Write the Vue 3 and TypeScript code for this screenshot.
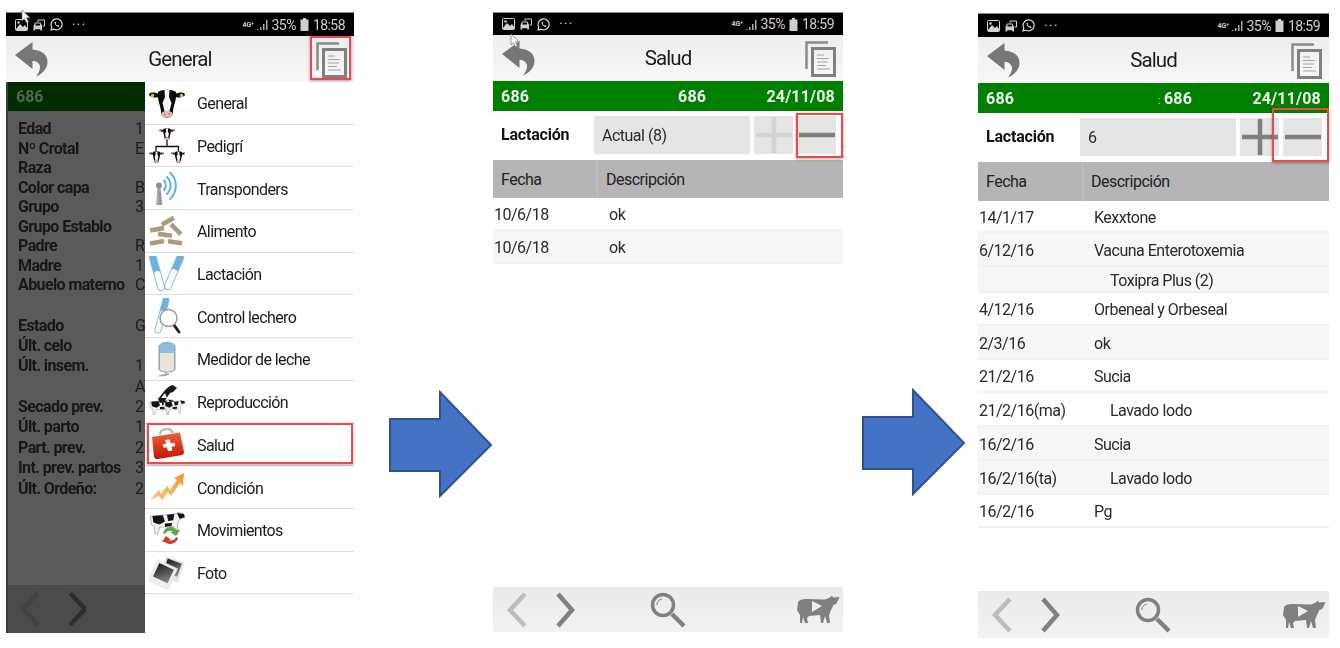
<script setup lang="ts">
interface Row { date: string; desc: string; indent?: boolean; alt?: boolean; h: number }
interface Screen {
  id: string; time: string; title: string; colon: boolean; lact: string; plusOn: boolean;
  rows: Row[];
}

const cols = [
  { y: 0, rows: [
    ['Edad', '10'], ['Nº Crotal', 'ES'], ['Raza', ''], ['Color capa', 'Bl'], ['Grupo', '3'],
    ['Grupo Establo', ''], ['Padre', 'R-'], ['Madre', '10'], ['Abuelo materno', 'C.'],
  ] },
  { y: 1, rows: [
    ['Estado', 'G'], ['Últ. celo', ''], ['Últ. insem.', '1'], ['', 'A'], ['Secado prev.', '2'],
    ['Últ. parto', '1'], ['Part. prev.', '2'], ['Int. prev. partos', '3'], ['Últ. Ordeño:', '2'],
  ] },
];

const menu = ['General', 'Pedigrí', 'Transponders', 'Alimento', 'Lactación', 'Control lechero',
  'Medidor de leche', 'Reproducción', 'Salud', 'Condición', 'Movimientos', 'Foto'];

const screens: Screen[] = [
  { id: 'p2', time: '18:59', title: 'Salud', colon: false, lact: 'Actual (8)', plusOn: false, rows: [
    { date: '10/6/18', desc: 'ok', h: 33 },
    { date: '10/6/18', desc: 'ok', alt: true, h: 33 },
  ] },
  { id: 'p3', time: '18:59', title: 'Salud', colon: true, lact: '6', plusOn: true, rows: [
    { date: '14/1/17', desc: 'Kexxtone', h: 32 },
    { date: '6/12/16', desc: 'Vacuna Enterotoxemia', alt: true, h: 34 },
    { date: '', desc: 'Toxipra Plus (2)', indent: true, alt: true, h: 26 },
    { date: '4/12/16', desc: 'Orbeneal y Orbeseal', h: 33 },
    { date: '2/3/16', desc: 'ok', alt: true, h: 34 },
    { date: '21/2/16', desc: 'Sucia', h: 33 },
    { date: '21/2/16(ma)', desc: 'Lavado Iodo', indent: true, h: 34 },
    { date: '16/2/16', desc: 'Sucia', alt: true, h: 34 },
    { date: '16/2/16(ta)', desc: 'Lavado Iodo', indent: true, alt: true, h: 34 },
    { date: '16/2/16', desc: 'Pg', h: 33 },
  ] },
];

const statusScreens = [
  { id: 'p1', time: '18:58', title: 'General' },
  ...screens,
];
</script>

<template>
  <div class="stage">
    <svg class="defs" width="0" height="0" aria-hidden="true">
      <defs>
        <symbol id="cowhead" viewBox="0 0 36 30">
          <ellipse cx="5" cy="6" rx="5" ry="2.4" fill="#111" transform="rotate(8 5 6)" />
          <ellipse cx="31" cy="6" rx="5" ry="2.4" fill="#111" transform="rotate(-8 31 6)" />
          <circle cx="3.500" cy="6.500" r="1.700" fill="#d9c92e" />
          <circle cx="32.500" cy="6.500" r="1.700" fill="#d9c92e" />
          <path d="M9 3C13 0 23 0 27 3C28 10 25 15 24 22C24 27 21 28.500 18 28.500C15 28.500 12 27 12 22C11 15 8 10 9 3Z" fill="#0c0c0c" />
          <path d="M15.500 1H20.500L20 8L22.500 14L20.500 22H15.500L13.500 14L16 8Z" fill="#f4f4f4" />
          <ellipse cx="18" cy="25" rx="5.600" ry="3.300" fill="#eab9ab" />
          <circle cx="15.800" cy="25" r=".8" fill="#8b5a50" />
          <circle cx="20.200" cy="25" r=".8" fill="#8b5a50" />
        </symbol>
        <symbol id="spotcow" viewBox="0 0 34 22">
          <path d="M1 4L24 2L28 .5L33 2L34 5L29 7L27 12V21H24.500L23.500 14L10 14.500L8 21H5.500L5 14L2 12Z" fill="#f1f1f1" stroke="#8a8a8a" stroke-width=".6" />
          <path d="M3 3.800L13 3L15 9L10 12L4 10ZM17 2.700L24 2L23 8L18 8.500ZM26.500 1L33 2L34 5L29 6.500ZM15 11L22 10.500L21 14H15Z" fill="#141414" />
          <ellipse cx="19" cy="15" rx="2.500" ry="1.300" fill="#e6b4a6" />
        </symbol>
        <linearGradient id="red" x1="0" y1="0" x2="0" y2="1">
          <stop offset="0" stop-color="#f2603a" />
          <stop offset="1" stop-color="#bf1606" />
        </linearGradient>
        <linearGradient id="orange" x1="0" y1="1" x2="1" y2="0">
          <stop offset="0" stop-color="#f9c77c" />
          <stop offset="1" stop-color="#ef9a2c" />
        </linearGradient>
        <linearGradient id="photo" x1="0" y1="0" x2="1" y2="1">
          <stop offset="0" stop-color="#1c1c1c" />
          <stop offset="1" stop-color="#8a8a8a" />
        </linearGradient>
        <linearGradient id="pin" x1="0" y1="0" x2="1" y2="0">
          <stop offset="0" stop-color="#b9b9b9" />
          <stop offset="1" stop-color="#858585" />
        </linearGradient>
      </defs>
    </svg>

    <template v-for="(sc, n) in statusScreens" :key="sc.id">
      <svg v-if="n > 0" class="arrow" :class="'arrow' + n" viewBox="0 0 104 108" width="104" height="108">
        <path d="M1 29H51V2L102 55L51 106V81H1Z" fill="#4472c4" stroke="#2f528f" stroke-width="2" />
      </svg>

      <section class="phone" :class="sc.id">
        <!-- status bar -->
        <div class="status">
          <div class="status-left">
            <svg width="13" height="12" viewBox="0 0 13 12"><rect x=".5" y=".5" width="12" height="11" rx="1" fill="none" stroke="#d5d5d5" /><path d="M1 10L5 5L8 8L10 6L12 9V11H1Z" fill="#d5d5d5" /><circle cx="3.500" cy="3.500" r="1.200" fill="#d5d5d5" /></svg>
            <svg width="12" height="12" viewBox="0 0 12 12"><path d="M0.500 7L2 3.500H7.500L9 7V11.500H7.300V10.300H2.200V11.500H.5Z" fill="#cdcdcd" /><path d="M5 3V1H11.500V7H9.500" fill="none" stroke="#cdcdcd" /><rect x="2.500" y="4.500" width="4.500" height="2" fill="#000" /></svg>
            <svg width="13" height="13" viewBox="0 0 13 13"><path d="M1 12L1.800 9A5.500 5.500 0 1 1 4 11.200Z" fill="none" stroke="#dcdcdc" stroke-width="1.200" /><path d="M4.500 4C4.500 7 6.500 8.800 9 9L9.500 7.800L8 7L7.300 7.600C6.500 7.200 6 6.500 5.700 5.800L6.200 5L5.500 3.700Z" fill="#dcdcdc" /></svg>
            <span class="dots">···</span>
          </div>
          <div class="status-right">
            <span class="net">4G<sup>+</sup></span>
            <svg width="11" height="11" viewBox="0 0 11 11"><path d="M0 10h1.500v1H0ZM3 8h1.500v3H3ZM6 5h1.500v6H6ZM9 1h1.500v10H9Z" fill="#aaa" /></svg>
            <span class="pct">35%</span>
            <svg width="9" height="13" viewBox="0 0 9 13"><path d="M3 0H6V1.500H8.500V13H.5V1.500H3Z" fill="#d0d0d0" /></svg>
            <span class="time">{{ sc.time }}</span>
          </div>
        </div>

        <!-- title bar -->
        <header class="head">
          <svg class="back" width="33" height="35" viewBox="0 0 33 35"><path d="M0 13L17.500 0V7.500C27 8 33 13 32.500 21C32 27 27 32 21 34.500C25 29 26 25 24 22C22.500 19.500 20 19 17.500 19V27Z" fill="#777" /></svg>
          <h1>{{ sc.title }}</h1>
          <svg class="docs" width="32" height="37" viewBox="0 0 32 37">
            <path d="M24 2.500H2.500V29" fill="none" stroke="#8a8a8a" stroke-width="2.500" />
            <rect x="8.500" y="8.500" width="22" height="27" fill="none" stroke="#808080" stroke-width="3" />
            <path d="M13 15H20M13 18.500H25M13 22H24M13 25.500H22M13 29H26" stroke="#a3a3a3" stroke-width="1.100" />
          </svg>
        </header>

        <!-- general screen with the open menu -->
        <div v-if="sc.id === 'p1'" class="split">
          <aside class="dim">
            <div class="dim-id">686</div>
            <div class="dim-info">
              <div v-for="c in cols" :key="c.y" class="dim-block" :class="'block' + c.y">
                <div v-for="(r, i) in c.rows" :key="i" class="dim-row">
                  <b>{{ r[0] }}</b><span>{{ r[1] }}</span>
                </div>
              </div>
            </div>
            <div class="dim-bar">
              <svg width="66" height="36" viewBox="0 0 66 36"><path d="M18 2L3 18L18 34" fill="none" stroke="#434343" stroke-width="4.500" /><path d="M50 2L65 18L50 34" fill="none" stroke="#2e2e2e" stroke-width="4.500" /></svg>
            </div>
          </aside>
          <nav class="menu">
            <div v-for="m in menu" :key="m" class="menu-row">
              <svg class="mi" width="36" height="36" viewBox="0 0 36 36">
                <use v-if="m === 'General'" href="#cowhead" x="0" y="4" width="36" height="30" />
                <g v-else-if="m === 'Pedigrí'">
                  <path d="M18 10V18M7 24V18.500H29.500V24" fill="none" stroke="#111" stroke-width="1.300" />
                  <use href="#cowhead" x="10" y="0" width="16" height="13" />
                  <use href="#cowhead" x="0" y="23" width="15" height="12.500" />
                  <use href="#cowhead" x="22" y="23" width="15" height="12.500" />
                </g>
                <g v-else-if="m === 'Transponders'">
                  <path d="M8.500 17H11.500L13 35H7Z" fill="url(#pin)" />
                  <circle cx="10" cy="15.500" r="3" fill="#8e8e8e" />
                  <path d="M15 10.500A7 7 0 0 1 15 20M18 7A12 12 0 0 1 18 24M21 2.500A18 18 0 0 1 21 29" fill="none" stroke="#58b4dc" stroke-width="2" stroke-linecap="round" />
                </g>
                <g v-else-if="m === 'Alimento'" fill="#a99a80">
                  <rect x="12" y="6" width="14" height="4.500" transform="rotate(-30 19 8.500)" />
                  <rect x="20" y="14" width="14" height="4.500" transform="rotate(45 27 16.250)" />
                  <rect x="1" y="14" width="14" height="4.500" transform="rotate(-10 8 16.250)" />
                  <rect x="9" y="19.500" width="14" height="4.500" transform="rotate(8 16 21.750)" />
                  <rect x="1" y="27" width="14" height="4.500" transform="rotate(-10 8 29.250)" />
                  <rect x="19" y="27" width="14" height="4.500" transform="rotate(8 26 29.250)" />
                </g>
                <g v-else-if="m === 'Lactación'" stroke-linecap="round">
                  <path d="M4 2L12 31" stroke="#8dbfdc" stroke-width="8" />
                  <path d="M4 2L12 31" stroke="#6cb0e0" stroke-width="6" />
                  <path d="M8.500 18L12 31" stroke="#fbfdfe" stroke-width="6" />
                  <path d="M31 2L19 30" stroke="#8dbfdc" stroke-width="8" />
                  <path d="M31 2L19 30" stroke="#6cb0e0" stroke-width="6" />
                  <path d="M25 16L19 30" stroke="#fbfdfe" stroke-width="6" />
                </g>
                <g v-else-if="m === 'Control lechero'" stroke-linecap="round">
                  <path d="M17 2L9 32" stroke="#8dbfdc" stroke-width="7" />
                  <path d="M17 2L14 13" stroke="#6cb0e0" stroke-width="5" />
                  <path d="M13.500 15L9 32" stroke="#fbfdfe" stroke-width="5" />
                  <path d="M25 27L30 34" stroke="#222" stroke-width="3" />
                  <circle cx="19.500" cy="20" r="8.500" fill="#fdfdfd" stroke="#9a9a9a" stroke-width="1.500" />
                </g>
                <g v-else-if="m === 'Medidor de leche'">
                  <path d="M10 6C10 3 14 1.500 18 1.500C22 1.500 26 3 26 6V28C26 30 22 31 18 31C14 31 10 30 10 28Z" fill="#8ebce0" stroke="#7d9fb8" />
                  <path d="M11 12H25V28C25 29.500 22 30.500 18 30.500C14 30.500 11 29.500 11 28Z" fill="#e8e5d4" />
                  <path d="M10 35L20 33M17 31V35" stroke="#a5a5a5" stroke-width="1.500" fill="none" />
                </g>
                <g v-else-if="m === 'Reproducción'">
                  <use href="#spotcow" x="0" y="14" width="25" height="18" />
                  <use href="#spotcow" x="14" y="15" width="22" height="16" />
                  <path d="M9 15L17 5L21 2L24 1L28 4L24 8L21 9L15 18L11 19Z" fill="#181818" />
                  <path d="M12 14L16 9L18 14Z" fill="#f1f1f1" />
                </g>
                <g v-else-if="m === 'Salud'">
                  <path d="M11 9C11 2 22 1 24 7" fill="none" stroke="#bdbdbd" stroke-width="2.500" />
                  <path d="M3 11L31 6.500L35 26C35 28 34 29 32 29.300L9 33C7 33.300 5.500 32.500 5 31Z" fill="url(#red)" />
                  <path d="M17 13.500H21.500L22 17.500H26V21H22.300L22.800 25H18.300L17.800 21H14V17.500H17.500Z" fill="#fff" transform="rotate(-8 20 20)" />
                </g>
                <g v-else-if="m === 'Condición'">
                  <path d="M1 31L10 21L12 25L18 17L21 21L28 11L25 9L35 4L34 17L31 14L22 27L19 23L13 31L10 27Z" fill="url(#orange)" />
                </g>
                <g v-else-if="m === 'Movimientos'">
                  <use href="#spotcow" x="0" y="0" width="36" height="23" />
                  <path d="M14 21A8 8 0 0 1 28 18L31 18L27 24L21 20L24 20A5 5 0 0 0 16 22Z" fill="#58a94a" />
                  <path d="M29 26A8 8 0 0 1 16 30L13 30L17 24L22 28L20 28A5 5 0 0 0 27 25Z" fill="#d13b28" />
                </g>
                <g v-else>
                  <g transform="rotate(20 24 15)"><rect x="13" y="5" width="20" height="21" fill="#e8e6de" /><rect x="15.500" y="7" width="15" height="14" fill="url(#photo)" /></g>
                  <g transform="rotate(25 14 20)"><rect x="3" y="9" width="22" height="23" fill="#efede6" stroke="#ddd" stroke-width=".5" /><rect x="6" y="11.500" width="16" height="15" fill="url(#photo)" /></g>
                </g>
              </svg>
              <span>{{ m }}</span>
            </div>
          </nav>
          <div class="mark mark-salud"></div>
        </div>

        <!-- detail screens -->
        <template v-for="d in screens" :key="d.id">
          <div v-if="d.id === sc.id" class="detail">
            <div class="ident">
              <span>686</span>
              <span class="ident-c"><i v-if="d.colon" class="colon">:</i>686</span>
              <span>24/11/08</span>
            </div>
            <div class="lact">
              <b>Lactación</b>
              <div class="select">{{ d.lact }}</div>
              <div class="step">
                <svg width="36" height="36" viewBox="0 0 36 36"><path d="M0 18H36M18 0V36" :stroke="d.plusOn ? '#808080' : '#d4d4d4'" stroke-width="4.500" /></svg>
              </div>
              <div class="step">
                <svg width="36" height="36" viewBox="0 0 36 36"><path d="M0 18H36" stroke="#808080" stroke-width="4.500" /></svg>
              </div>
            </div>
            <div class="thead"><span>Fecha</span><span>Descripción</span></div>
            <div class="tbody">
              <div v-for="(r, i) in d.rows" :key="i" class="trow" :class="{ alt: r.alt }" :style="{ height: r.h + 'px' }">
                <span class="td-date">{{ r.date }}</span>
                <span class="td-desc" :class="{ indent: r.indent }">{{ r.desc }}</span>
              </div>
            </div>
            <footer class="bar">
              <svg class="chev" width="70" height="36" viewBox="0 0 70 36"><path d="M20 2L5 18L20 34" fill="none" stroke="#bcbcbc" stroke-width="4.500" /><path d="M53 2L67 18L53 34" fill="none" stroke="#808080" stroke-width="4.500" /></svg>
              <svg class="lens" width="36" height="36" viewBox="0 0 36 36">
                <circle cx="13" cy="13" r="10.500" fill="none" stroke="#808080" stroke-width="3.500" />
                <path d="M7 13A6 6 0 0 1 12 7" fill="none" stroke="#909090" stroke-width="1.200" />
                <path d="M22 22L34 34" stroke="#808080" stroke-width="4.500" />
              </svg>
              <svg class="cow" width="43" height="29" viewBox="0 0 43 29">
                <path d="M1 8C1 5 5 4 10 4L28 4.500L33 2.500L35 .5L36 2.500L42.500 2L41 5.500L39 9L36.500 10L34 15L32 20L33 28H30L28 21L26 28H24L23 20L12 21L10 23L11 28H8L6 22L5 28H3L3 20L0 15Z" fill="#808080" />
                <path d="M15 6L25 11L15 17Z" fill="#efefef" />
              </svg>
            </footer>
          </div>
        </template>

        <div class="mark" :class="'mark-' + sc.id"></div>
        <svg v-if="sc.id !== 'p3'" class="cursor" :class="'cursor-' + sc.id" width="11" height="15" viewBox="0 0 11 15">
          <path d="M1 1V12L3.500 9.500L5.500 14L7.500 13L5.500 8.800H9Z" fill="#fff" stroke="#777" stroke-width=".7" />
        </svg>
      </section>
    </template>
  </div>
</template>

<style>
html, body { margin: 0; background: #fff; }
</style>

<style scoped>
.stage {
  width: 1340px;
  height: 648px;
  display: flex;
  align-items: flex-start;
  overflow: hidden;
  background: #fff;
  font-family: Roboto, "Liberation Sans", sans-serif;
  color: #222;
}
.defs { position: absolute; }

.arrow { flex: none; }
.arrow1 { margin: 390px 0 0 35px; }
.arrow2 { margin: 388px 0 0 19px; }

.phone {
  position: relative;
  flex: none;
  display: flex;
  flex-direction: column;
  filter: blur(.35px);
}
.p1 { width: 348px; height: 621px; margin: 12px 0 0 6px; }
.p2 { width: 350px; height: 620px; margin-top: 12px; }
.p3 { width: 351px; height: 625px; margin: 13px 0 0 12px; }

.status {
  height: 24px;
  flex: none;
  background: #000;
  border-top: 1px solid #888;
  box-sizing: border-box;
  display: flex;
  justify-content: space-between;
  align-items: center;
  padding: 0 9px;
  color: #cfcfcf;
}
.p2 .status { height: 23px; }
.status-left, .status-right { display: flex; align-items: center; }
.status-left { gap: 5px; }
.dots { margin-left: 4px; font-size: 14px; letter-spacing: 1.2px; }
.status-right { gap: 4px; font-size: 14px; letter-spacing: -.55px; }
.net { font-size: 7px; font-weight: 700; line-height: 8px; letter-spacing: 0; width: 10px; }
.net sup { font-size: 5px; vertical-align: top; line-height: 5px; }

.head {
  height: 46px;
  flex: none;
  display: flex;
  align-items: center;
  justify-content: space-between;
  padding: 0 7px 0 9px;
  background: linear-gradient(#ededed, #f8f8f8);
  position: relative;
}
.head h1 {
  margin: 0;
  font-size: 20.500px;
  font-weight: 400;
  letter-spacing: -.9px;
  color: #1b1b1b;
  position: absolute;
  left: 0;
  right: 0;
  text-align: center;
  pointer-events: none;
}

.split { flex: 1; display: flex; position: relative; min-height: 0; }
.dim {
  width: 139px;
  flex: none;
  display: flex;
  flex-direction: column;
  background: #5a5a5a;
  border-left: 2px solid #3c3c3c;
  box-sizing: border-box;
  overflow: hidden;
}
.dim-id {
  height: 29px;
  flex: none;
  background: #012b01;
  color: #4e6a4e;
  font: 700 16px/29px Roboto, sans-serif;
  padding-left: 8px;
}
.dim-info { flex: 1; padding: 8px 0 0 10px; color: #171717; }
.dim-row { display: flex; white-space: nowrap; }
.dim-row b { width: 117px; flex: none; font-size: 16px; letter-spacing: -.6px; font-weight: 700; }
.dim-row span { font-size: 16px; color: #1c1c1c; }
.block0 .dim-row { height: 19.500px; line-height: 19.500px; }
.block1 { margin-top: 21px; }
.block1 .dim-row { height: 20.400px; line-height: 20.400px; }
.dim-bar {
  height: 48px;
  flex: none;
  background: #4b4b4b;
  padding: 6px 0 0 12px;
  box-sizing: border-box;
}

.menu { flex: 1; background: #fff; display: flex; flex-direction: column; }
.menu-row {
  height: 42.700px;
  box-sizing: border-box;
  flex: none;
  display: flex;
  align-items: center;
  gap: 12px;
  padding-left: 4px;
  border-bottom: 1px solid #dedede;
  font-size: 16px;
  letter-spacing: -.6px;
  color: #1b1b1b;
}
.menu-row span { padding-top: 2px; }
.mi { flex: none; }

.detail { flex: 1; display: flex; flex-direction: column; min-height: 0; }
.ident {
  height: 30px;
  flex: none;
  background: #008000;
  color: #f2f6f2;
  font-weight: 700;
  font-size: 16px;
  display: flex;
  align-items: center;
  justify-content: space-between;
  padding: 0 8px;
  letter-spacing: .2px;
}
.ident-c { position: absolute; left: 185px; }
.p3 .ident-c { left: 180px; }
.colon { font-style: normal; font-size: 11px; font-weight: 400; opacity: .75; margin-right: 3px; }
.lact {
  height: 49px;
  flex: none;
  display: flex;
  align-items: center;
  padding: 0 8px 2px;
  gap: 4px;
  box-sizing: border-box;
}
.lact b { width: 89px; flex: none; font-size: 16px; color: #111; letter-spacing: -.2px; }
.p3 .lact b { width: 90px; }
.select {
  width: 156px;
  height: 38px;
  flex: none;
  background: #e5e5e5;
  box-sizing: border-box;
  padding-left: 8px;
  line-height: 40px;
  font-size: 16px;
  letter-spacing: -.5px;
  color: #2a2a2a;
}
.step {
  width: 39px;
  height: 38px;
  flex: none;
  background: #e5e5e5;
  display: flex;
  align-items: center;
  justify-content: center;
}
.thead {
  height: 38px;
  flex: none;
  background: #b5b5b5;
  display: flex;
  align-items: center;
  font-size: 16px;
  letter-spacing: -.5px;
  color: #222;
  position: relative;
}
.p3 .thead { height: 39px; }
.thead span:first-child {
  width: 105px;
  box-sizing: border-box;
  padding-left: 8px;
  align-self: stretch;
  display: flex;
  align-items: center;
  border-right: 1px solid #c0c0c0;
}
.thead span:last-child { padding-left: 8px; }
.tbody { flex: 1; min-height: 0; }
.trow {
  box-sizing: border-box;
  display: flex;
  align-items: center;
  font-size: 16px;
  letter-spacing: -.5px;
  color: #2a2a2a;
  border-bottom: 2px solid #f1f1f1;
  padding: 2px 0 0 1px;
}
.trow.alt { background: #f6f6f6; }
.td-date { width: 115px; flex: none; }
.td-desc.indent { margin-left: 16px; }

.bar {
  height: 45px;
  flex: none;
  background: linear-gradient(#eaeaea, #f2f2f2);
  display: flex;
  align-items: center;
  position: relative;
  padding-left: 11px;
  box-sizing: border-box;
}
.p3 .bar { height: 47px; }
.chev { margin-left: 1px; }
.lens { margin-left: 75px; }
.cow { margin-left: auto; margin-right: 3px; }

.mark {
  position: absolute;
  border: 2px solid #f0474c;
  box-shadow: 0 1px 3px rgba(0, 0, 0, .35);
  pointer-events: none;
  box-sizing: border-box;
}
.mark-p1 { left: 304px; top: 24px; width: 41px; height: 44px; }
.mark-p2 { left: 303px; top: 101px; width: 47px; height: 45px; }
.mark-p3 { left: 294px; top: 95px; width: 57px; height: 54px; }
.mark-salud { left: 141px; top: 341px; width: 206px; height: 41px; }

.cursor { position: absolute; }
.cursor-p1 { left: 15px; top: -3px; }
.cursor-p2 { left: 17px; top: 21px; }
</style>
